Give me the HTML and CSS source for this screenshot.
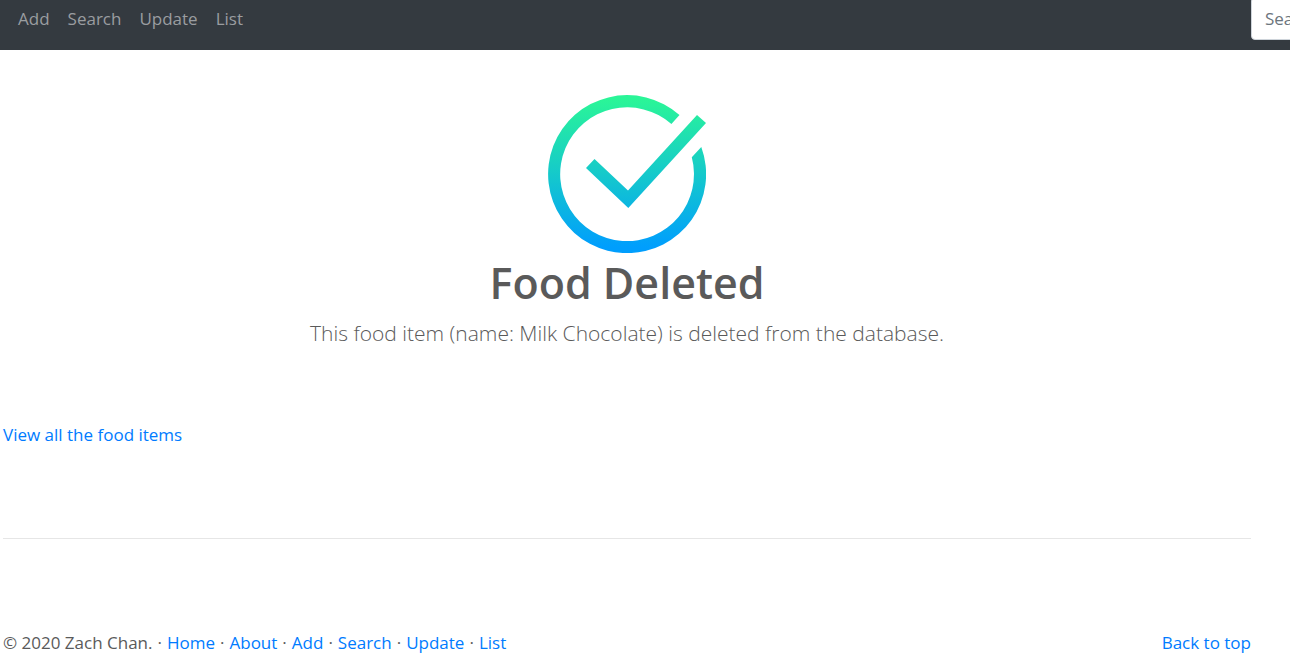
FILE: index.html
```html
<!DOCTYPE html>
<html lang="en">
<head>
<meta charset="utf-8">
<title>Food Deleted</title>
<link rel="stylesheet" href="styles.css">
</head>
<body>
<header class="navbar">
  <nav class="nav-links">
    <a href="#">Add</a>
    <a href="#">Search</a>
    <a href="#">Update</a>
    <a href="#">List</a>
  </nav>
  <form class="search">
    <input class="search-input" type="search" placeholder="Search" aria-label="Search">
  </form>
</header>
<div class="page">
  <main>
    <section class="message">
      <svg class="check" viewBox="0 0 158 158" aria-hidden="true">
        <defs>
          <linearGradient id="fade" gradientUnits="userSpaceOnUse" x1="0" y1="5" x2="0" y2="152">
            <stop offset="0" stop-color="#2af598"/>
            <stop offset="1" stop-color="#009efd"/>
          </linearGradient>
        </defs>
        <path fill="url(#fade)" d="M131.500 20A79 79 0 1 0 153.300 52L143.800 62.300A66.900 66.900 0 1 1 123.400 29.100Z"/>
        <path fill="url(#fade)" d="M38 73L46.500 64L80 95.500L149 20L158 28L80.300 113Z"/>
      </svg>
      <h1 class="title">Food Deleted</h1>
      <p class="lead">This food item (name: Milk Chocolate) is deleted from the database.</p>
    </section>
    <p class="view-all"><a href="#">View all the food items</a></p>
    <hr class="divider">
  </main>
  <footer class="footer">
    <div class="footer-links">
      <span>© 2020 Zach Chan.</span>
      <span>·</span>
      <a href="#">Home</a>
      <span>·</span>
      <a href="#">About</a>
      <span>·</span>
      <a href="#">Add</a>
      <span>·</span>
      <a href="#">Search</a>
      <span>·</span>
      <a href="#">Update</a>
      <span>·</span>
      <a href="#">List</a>
    </div>
    <a href="#">Back to top</a>
  </footer>
</div>
</body>
</html>
```
FILE: styles.css
```css
* { box-sizing: border-box; }

body {
  margin: 0;
  background: #fff;
  color: #5a5a5a;
  font-family: "Segoe UI", "Open Sans", "Noto Sans", sans-serif;
  font-size: 17px;
  line-height: 27px;
}

a { color: #007bff; text-decoration: none; }
p { margin: 0; }

.navbar {
  display: flex;
  align-items: flex-end;
  height: 50px;
  padding-bottom: 10px;
  padding-left: 18px;
  background: #343a40;
  overflow: hidden;
}

.nav-links { display: flex; flex: 1; gap: 18px; padding-bottom: 8px; }
.nav-links a { color: #9a9da0; }

.search { flex: 0 0 39px; min-width: 0; }

.search-input {
  display: block;
  width: 220px;
  height: 43px;
  padding: 0 13px;
  border: 1px solid #ced4da;
  border-radius: 4px;
  background: #fff;
  font: inherit;
}
.search-input::placeholder { color: #6c757d; opacity: 1; }

.page { padding: 45px 39px 0 3px; }

.message { text-align: center; }
.check { display: block; width: 158px; height: 158px; margin: 0 auto; }
.title { margin: 0; font-size: 43px; font-weight: 600; line-height: 60px; }
.lead { font-size: 21px; font-weight: 300; line-height: 40px; }

.view-all { margin-top: 68px; }

.divider {
  height: 1px;
  margin: 90px 0;
  border: 0;
  background: #e6e6e6;
}

.footer { display: flex; justify-content: space-between; }
.footer-links { display: flex; flex-wrap: wrap; gap: 5px; }
```
